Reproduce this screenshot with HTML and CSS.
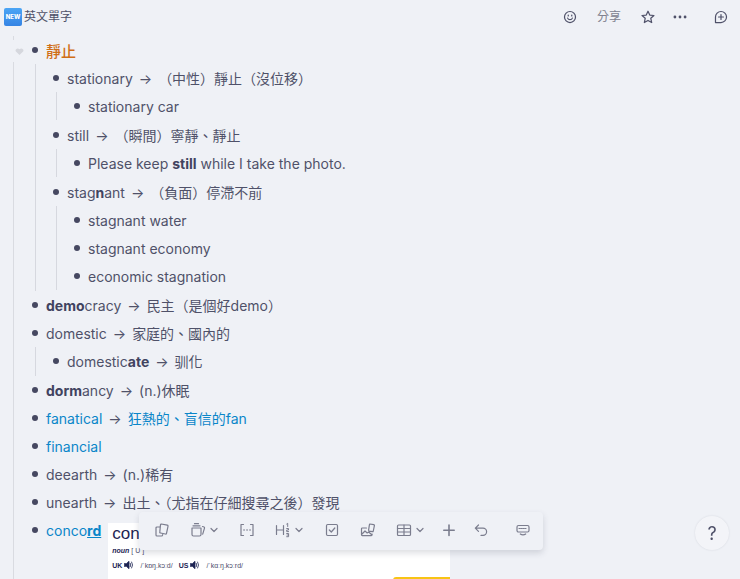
FILE: index.html
```html
<!DOCTYPE html>
<html lang="zh-Hant">

<head>
    <meta charset="UTF-8">
    <meta name="viewport" content="width=device-width, initial-scale=1.0">
    <title>英文單字</title>
    <link rel="stylesheet" href="styles.css">
</head>

<body>
    <header class="topbar">
        <a class="doc-title" href="#">
            <span class="doc-icon">NEW</span>
            <span>英文單字</span>
        </a>
        <nav class="actions">
            <button type="button" aria-label="表情">
                <svg viewBox="0 0 16 16"><circle cx="8" cy="8" r="6.3"/><path d="M5.3 9.3c.5 1.2 1.500 1.800 2.700 1.800s2.200-.6 2.700-1.800M6 5.800v1M10 5.800v1"/></svg>
            </button>
            <button type="button" class="share">分享</button>
            <button type="button" aria-label="收藏">
                <svg viewBox="0 0 16 16"><path d="M8 1.400l2 4.400 4.800.5-3.600 3.200 1 4.800L8 11.900l-4.200 2.400 1-4.800L1.200 6.300 6 5.800z"/></svg>
            </button>
            <button type="button" aria-label="更多">
                <svg class="solid" viewBox="0 0 16 16"><circle cx="2.200" cy="8" r="1.600"/><circle cx="8" cy="8" r="1.600"/><circle cx="13.800" cy="8" r="1.600"/></svg>
            </button>
            <button type="button" class="comment" aria-label="新增評論">
                <svg viewBox="0 0 16 16"><path d="M1.700 14.300V8A6.300 6.300 0 1 1 8 14.300zM8 5.200v5.600M5.200 8h5.600"/></svg>
            </button>
        </nav>
    </header>

    <main class="editor">
        <button type="button" class="fold" aria-label="收合">
            <svg viewBox="0 0 10 10"><path d="M5 9L1 5C-.5 3 2.500 0 5 2.500 7.500 0 10.500 3 9 5z"/></svg>
        </button>
        <ul class="outline">
            <li>
                <div class="row heading">靜止</div>
                <ul>
                    <li>
                        <div class="row">stationary<span class="arrow">→</span>（中性）靜止（沒位移）</div>
                        <ul>
                            <li><div class="row">stationary car</div></li>
                        </ul>
                    </li>
                    <li>
                        <div class="row">still<span class="arrow">→</span>（瞬間）寧靜、靜止</div>
                        <ul>
                            <li><div class="row">Please keep <b>still</b> while I take the photo.</div></li>
                        </ul>
                    </li>
                    <li>
                        <div class="row">stag<b>n</b>ant<span class="arrow">→</span>（負面）停滯不前</div>
                        <ul>
                            <li><div class="row">stagnant water</div></li>
                            <li><div class="row">stagnant economy</div></li>
                            <li><div class="row">economic stagnation</div></li>
                        </ul>
                    </li>
                </ul>
            </li>
            <li><div class="row"><b>demo</b>cracy<span class="arrow">→</span>民主（是個好demo）</div></li>
            <li>
                <div class="row">domestic<span class="arrow">→</span>家庭的、國內的</div>
                <ul>
                    <li><div class="row">domestic<b>ate</b><span class="arrow">→</span>驯化</div></li>
                </ul>
            </li>
            <li><div class="row"><b>dorm</b>ancy<span class="arrow">→</span>(n.)休眠</div></li>
            <li><div class="row"><span class="blue">fanatical</span><span class="arrow">→</span><span class="blue">狂熱的、盲信的fan</span></div></li>
            <li><div class="row"><span class="blue">financial</span></div></li>
            <li><div class="row">deearth<span class="arrow">→</span>(n.)稀有</div></li>
            <li><div class="row">unearth<span class="arrow">→</span>出土、（尤指在仔細搜尋之後）發現</div></li>
            <li class="with-card">
                <div class="row"><span class="blue">conco<b class="underline">rd</b></span></div>
                <section class="card">
                    <h2>concord</h2>
                    <p class="pos"><b><i>noun</i></b> [ U ]</p>
                    <p class="sound">
                        <b>UK</b>
                        <svg viewBox="0 0 14 12"><path class="cone" d="M0 4h3l4-3.500v11L3 8H0z"/><path d="M9 3.500q1.500 2.500 0 5M11 1.500q3 4.500 0 9"/></svg>
                        <span class="ipa">/ˈkɒŋ.kɔːd/</span>
                        <b>US</b>
                        <svg viewBox="0 0 14 12"><path class="cone" d="M0 4h3l4-3.500v11L3 8H0z"/><path d="M9 3.500q1.500 2.500 0 5M11 1.500q3 4.500 0 9"/></svg>
                        <span class="ipa">/ˈkɑːŋ.kɔːrd/</span>
                    </p>
                    <div class="card-action"></div>
                </section>
            </li>
        </ul>
    </main>

    <div class="toolbar" role="toolbar">
        <div class="group">
            <button type="button" aria-label="複製">
                <svg viewBox="0 0 16 16"><path d="M7.300 2l6 1.200q.9.200.7 1.100l-1.500 7q-.2.900-1.100.7l-4.900-1q-.9-.2-.7-1.100l.7-7q.1-1 .8-.9zM5.600 5H3q-1 0-1 1v7q0 1 1 1h4.500q1 0 1.200-1.400"/></svg>
            </button>
            <button type="button" aria-label="顏色">
                <svg viewBox="0 0 16 16"><path d="M2 6h9v6.500q0 1.500-1.500 1.500h-6Q2 14 2 12.500zM3 3.800h7M4.500 1.700h4M12.500 4.500l1.600.5q.6.300.4 1.100l-1.800 6"/></svg>
                <svg class="chevron" viewBox="0 0 10 10"><path d="M2 3.500l3 3 3-3"/></svg>
            </button>
            <button type="button" aria-label="連結">
                <svg viewBox="0 0 16 16"><path d="M4.500 2.500H2v11h2.500M11.500 2.500H14v11h-2.500"/><path class="dots" d="M5 8h.1M8 8h.1M11 8h.1"/></svg>
            </button>
            <button type="button" aria-label="標題">
                <svg viewBox="0 0 16 16"><path d="M1.500 3.500v9M8.500 3.500v9M1.500 8h7"/><path class="thin" d="M11.700 2l1-.7v3.200M11.700 6.500h1.800v1.500h-1.800v1.600h1.900M11.700 11.500h1.900v3.200h-1.900M12 13h1.500"/></svg>
                <svg class="chevron" viewBox="0 0 10 10"><path d="M2 3.500l3 3 3-3"/></svg>
            </button>
            <button type="button" aria-label="待辦">
                <svg viewBox="0 0 16 16"><rect x="2.500" y="2.500" width="11" height="11" rx="1.200"/><path d="M5.300 8l2 2 3.500-4"/></svg>
            </button>
            <button type="button" aria-label="圖片">
                <svg viewBox="0 0 16 16"><path d="M6.500 6H2.300q-.8 0-.8.800v6q0 .8.800.8h9q.8 0 .8-.8V12M2 12l3-3 2.200 2 1.500-1 2.800 2.500M9.800 2l3.900.7q.9.200.7 1L13.300 9q-.2.800-1 .7l-3-.6q-.8-.2-.7-1l.8-5.300q.1-.8.4-.8z"/></svg>
            </button>
            <button type="button" aria-label="表格">
                <svg viewBox="0 0 16 16"><rect x="1.500" y="3" width="13" height="10.500" rx="1"/><path d="M1.500 6.500h13M1.500 10h13M8 3v10.500"/></svg>
                <svg class="chevron" viewBox="0 0 10 10"><path d="M2 3.500l3 3 3-3"/></svg>
            </button>
        </div>
        <button type="button" aria-label="新增">
            <svg class="bold" viewBox="0 0 16 16"><path d="M8 3v10.500M2.800 8.200h10.400"/></svg>
        </button>
        <button type="button" aria-label="復原">
            <svg viewBox="0 0 16 16"><path d="M5.500 3L2.300 6.200l3.200 3.200M2.500 6.200h7.500a3.600 3.600 0 0 1 0 7.200H8"/></svg>
        </button>
        <button type="button" class="keyboard" aria-label="鍵盤">
            <svg viewBox="0 0 16 16"><rect x="2" y="3.500" width="12" height="6.500" rx="1.500"/><path d="M4 6.500h8" stroke-dasharray="1 1"/><path d="M5.300 12q2.700 1.800 5.400 0"/></svg>
        </button>
    </div>

    <button type="button" class="help" aria-label="說明">?</button>
</body>

</html>
```
FILE: styles.css
```css
* {
    box-sizing: border-box;
    margin: 0;
    padding: 0;
}

body {
    display: flex;
    flex-direction: column;
    height: 100vh;
    overflow: hidden;
    background: #eff1f6;
    color: #4f5169;
    font-family: Inter, "Noto Sans CJK TC", sans-serif;
    font-size: 14px;
}

button {
    display: flex;
    align-items: center;
    border: none;
    background: none;
    color: inherit;
    font: inherit;
    cursor: pointer;
}

svg {
    width: 16px;
    height: 16px;
    fill: none;
    stroke: currentColor;
    stroke-width: 1.2;
    stroke-linecap: round;
    stroke-linejoin: round;
}

ul {
    list-style: none;
}

b {
    color: #414360;
    font-weight: 700;
}

/* top bar */
.topbar {
    display: flex;
    align-items: center;
    justify-content: space-between;
    height: 34px;
    flex-shrink: 0;
    padding: 0 12px 0 4px;
    font-size: 12px;
    line-height: 16px;
}

.doc-title {
    display: flex;
    align-items: center;
    gap: 2px;
    color: inherit;
    text-decoration: none;
}

.doc-icon {
    width: 18px;
    height: 18px;
    border-radius: 2px;
    background: linear-gradient(#4ba5f5, #3584e4);
    color: #fff;
    font-size: 6px;
    font-weight: 800;
    line-height: 18px;
    text-align: center;
}

.actions {
    display: flex;
    align-items: center;
    gap: 18px;
}

.actions svg {
    width: 14px;
    height: 14px;
    stroke-width: 1.4;
}

.actions .solid {
    fill: currentColor;
    stroke: none;
}

.actions .share {
    padding: 0 2px;
    color: #80818f;
}

.comment {
    margin-left: 9px;
}

/* outline */
.editor {
    position: relative;
    flex: 1;
    min-height: 0;
    overflow: hidden;
    padding-left: 13px;
}

.outline {
    min-height: 100%;
    margin-top: 2px;
    padding-left: 18px;
    border-left: 1px solid #d9dbe1;
}

.fold {
    position: absolute;
    top: 6px;
    left: 13px;
    height: 22px;
    padding: 0 2px;
    background: #eff1f6;
}

.fold svg {
    width: 9px;
    height: 9px;
    fill: #d5d7dd;
    stroke: none;
}

.outline ul {
    margin-left: 3px;
    padding-left: 17px;
    border-left: 1px solid #d6d8df;
}

.outline > li > ul > li {
    padding-bottom: 1px;
}

.row {
    display: flex;
    align-items: center;
    height: 28px;
    white-space: pre;
}

.row::before {
    content: "";
    width: 6px;
    height: 6px;
    margin-right: 8px;
    border-radius: 50%;
    background: #464861;
}

.heading {
    color: #d06f17;
    font-size: 15px;
    font-weight: 500;
}

.arrow {
    margin: 0 6px;
}

.blue,
.blue b {
    color: #0a86c9;
}

.underline {
    text-decoration: underline;
}

/* dictionary card */
.with-card {
    display: flex;
    align-items: flex-start;
    gap: 7px;
}

.card {
    width: 342px;
    margin-top: 7px;
    padding-left: 4px;
    background: #fff;
    color: #4b4c6b;
    font-family: "Liberation Sans", Arial, sans-serif;
    font-size: 7px;
}

.card h2 {
    color: #1d2453;
    font-size: 17px;
    font-weight: 400;
    line-height: 22px;
}

.card b {
    color: #1d2453;
}

.pos {
    line-height: 12px;
}

.sound {
    display: flex;
    align-items: center;
    gap: 2px;
    height: 16px;
}

.sound svg {
    width: 10px;
    height: 8px;
    color: #1d2453;
}

.sound .cone {
    fill: currentColor;
}

.ipa {
    margin: 0 4px;
}

.card-action {
    width: 57px;
    height: 24px;
    margin-top: 4px;
    margin-left: auto;
    border-top-left-radius: 3px;
    background: #f8c414;
}

/* floating toolbar */
.toolbar {
    position: fixed;
    bottom: 29px;
    left: 139px;
    display: flex;
    align-items: center;
    gap: 16px;
    width: 404px;
    height: 38px;
    padding: 0 12px 2px 15px;
    border-radius: 4px;
    background: #eff1f6;
    box-shadow: 0 3px 6px rgba(60, 64, 90, 0.18);
    color: #7b7d8e;
}

.group {
    display: flex;
    gap: 20px;
}

.toolbar button {
    gap: 3px;
}

.toolbar .chevron {
    width: 10px;
    height: 10px;
}

.toolbar .bold {
    stroke-width: 1.6;
}

.dots {
    stroke-width: 1.6;
}

.thin {
    stroke-width: 1;
}

.keyboard {
    margin-left: auto;
}

.help {
    position: fixed;
    right: 11px;
    bottom: 29px;
    justify-content: center;
    width: 34px;
    height: 34px;
    border-radius: 50%;
    background: #f3f4f8;
    box-shadow: 0 0 2px rgba(60, 64, 90, 0.15);
    font-size: 18px;
}
```
